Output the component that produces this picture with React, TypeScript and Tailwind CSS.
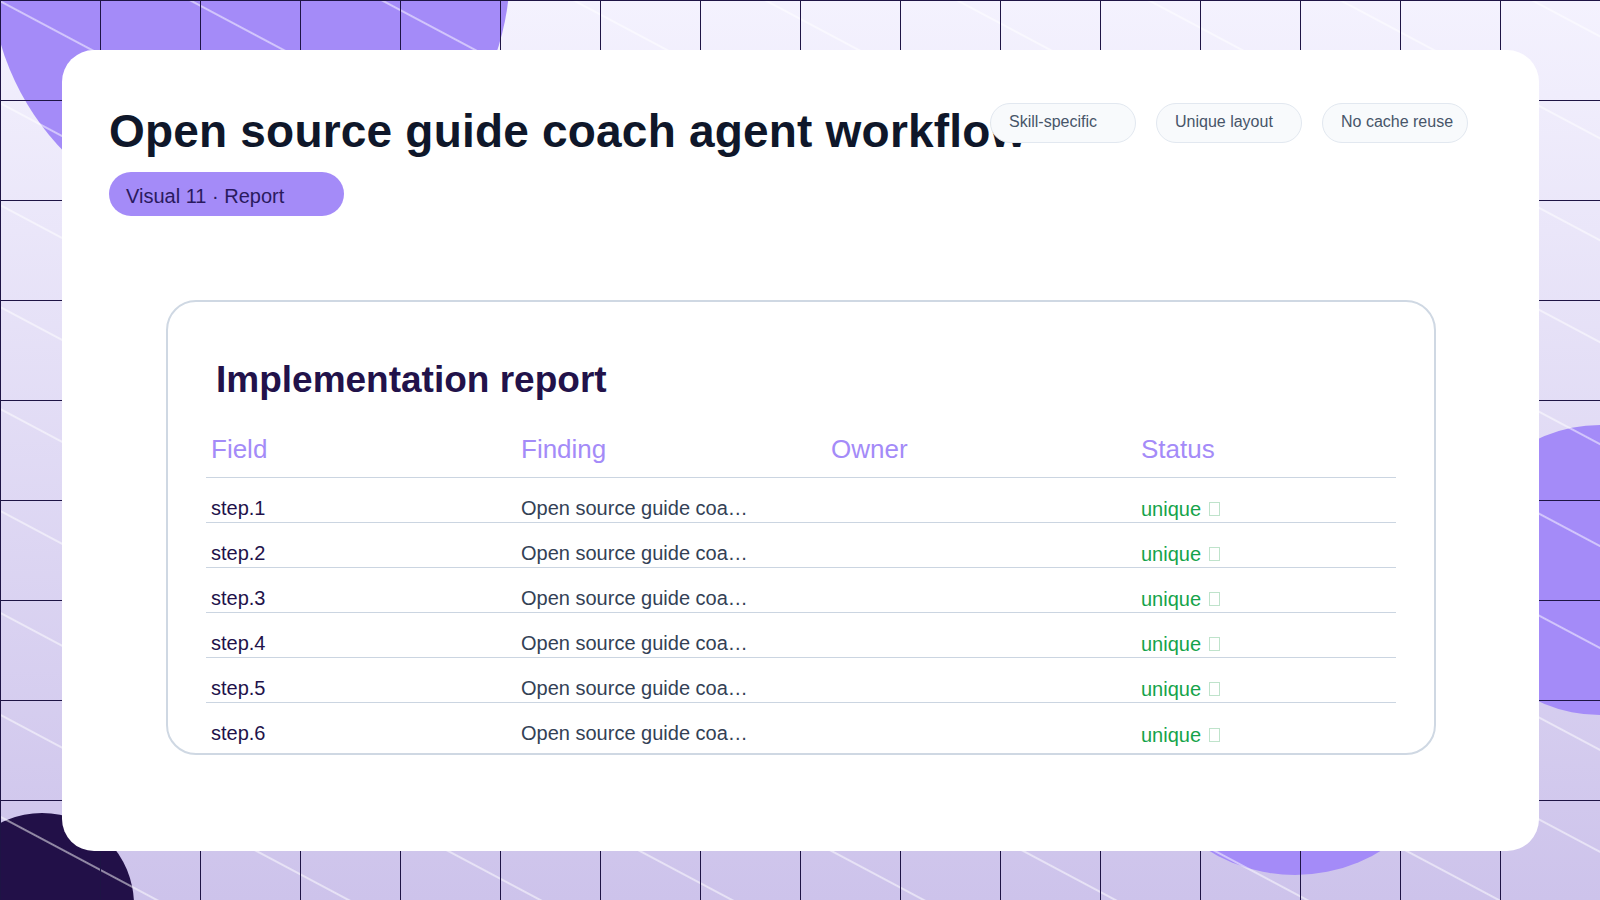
import React from "react";

const rows = [1, 2, 3, 4, 5, 6];

function Background() {
  return (
    <svg className="absolute inset-0" width="1600" height="900" viewBox="0 0 1600 900">
      <defs>
        <linearGradient id="bg" x1="0" y1="0" x2="0" y2="1">
          <stop offset="0" stopColor="#f4f2fe" />
          <stop offset="1" stopColor="#cdc3eb" />
        </linearGradient>
        <pattern id="diag" width="200" height="90" patternUnits="userSpaceOnUse" patternTransform="rotate(28)">
          <line x1="0" y1="1" x2="200" y2="1" stroke="#ffffff" strokeWidth="1.1" />
        </pattern>
        <pattern id="grid" width="100" height="100" patternUnits="userSpaceOnUse">
          <path d="M0 0.5H100M0.5 0V100" stroke="#1e1445" strokeWidth="1" fill="none" />
        </pattern>
      </defs>
      <rect width="1600" height="900" fill="url(#bg)" />
      <circle cx="250" cy="-30" r="260" fill="#a48bf8" />
      <circle cx="1600" cy="570" r="145" fill="#a48bf8" />
      <circle cx="1295" cy="710" r="165" fill="#a48bf8" />
      <circle cx="-30" cy="900" r="75" fill="#a48bf8" />
      <circle cx="42" cy="905" r="92" fill="#221048" />
      <rect width="1600" height="900" fill="url(#diag)" />
      <rect width="1600" height="900" fill="url(#grid)" />
    </svg>
  );
}

export default function App() {
  return (
    <div className="relative w-[1600px] h-[900px] overflow-hidden" style={{ fontFamily: '"Liberation Sans", Arial, sans-serif' }}>
      <Background />
      <div className="absolute left-[62px] top-[50px] w-[1477px] h-[801px] bg-white rounded-[32px] px-[47px] pt-[53px]">
        <h1 className="text-[46px] leading-[56px] font-bold text-[#0f172a] whitespace-nowrap tracking-[0.2px]">Open source guide coach agent workflow</h1>
        <div className="absolute left-[928px] top-[53px] flex gap-[20px]">
          {["Skill-specific", "Unique layout", "No cache reuse"].map((t) => (
            <div key={t} className="w-[146px] h-[40px] rounded-full border border-[#e2e8f0] bg-[#f8fafc] text-[16px] text-[#475569] pl-[18px] pt-[7px] leading-[22px]">{t}</div>
          ))}
        </div>
        <div className="mt-[13px] w-[235px] h-[44px] rounded-full bg-[#a48bf8] text-[20px] text-[#2a1a5e] pl-[17px] pt-[3px] flex items-center">Visual 11 · Report</div>
        <div className="mt-[84px] ml-[57px] w-[1270px] h-[455px] border-2 border-[#cfd8e3] rounded-[30px] px-[38px] pt-[55px]">
          <h2 className="text-[37px] leading-[46px] font-bold text-[#22124a] pl-[10px]">Implementation report</h2>
          <div className="mt-[31px] grid grid-cols-[310px_310px_310px_1fr] border-b border-[#cbd5e1] pb-[13px] text-[26px] text-[#a48bf8] leading-[30px]">
            <div className="pl-[5px]">Field</div>
            <div className="pl-[5px]">Finding</div>
            <div className="pl-[5px]">Owner</div>
            <div className="pl-[5px]">Status</div>
          </div>
          {rows.map((n, i) => (
            <div key={n} className={`grid grid-cols-[310px_310px_310px_1fr] h-[45px] pt-[18px] leading-[24px] text-[20px] ${i < 5 ? "border-b border-[#cbd5e1]" : ""}`}>
              <div className="pl-[5px] text-[#22124a]">step.{n}</div>
              <div className="pl-[5px] text-[#334155]">Open source guide coa…</div>
              <div />
              <div className="pl-[5px] text-[#16a34a] flex items-center gap-[8px]">unique<span className="inline-block w-[11px] h-[14px] border border-[#bfe3cb]" /></div>
            </div>
          ))}
        </div>
      </div>
    </div>
  );
}
